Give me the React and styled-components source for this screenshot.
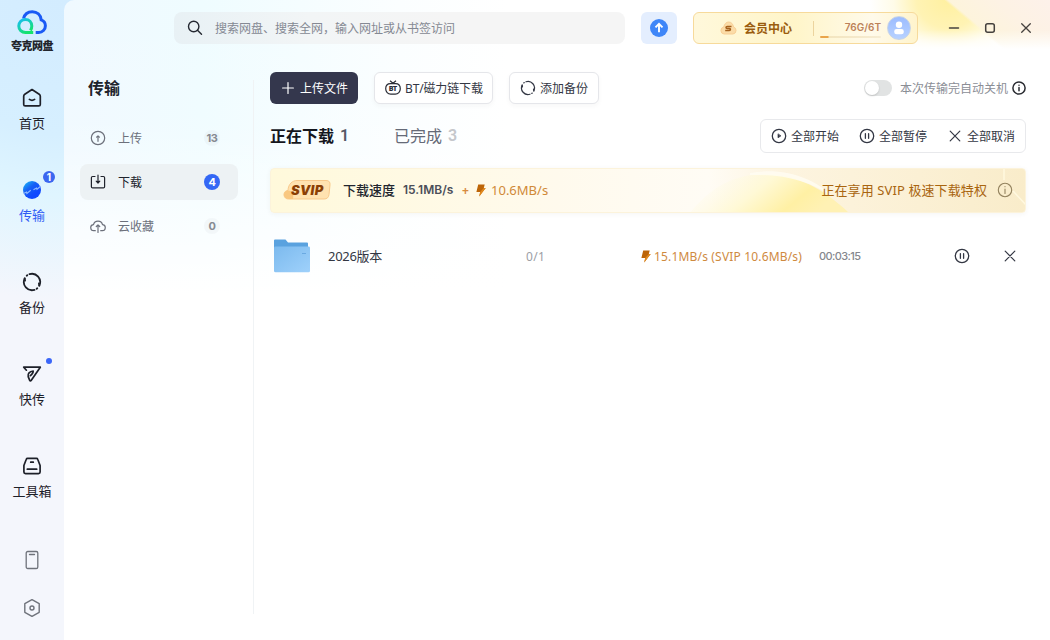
import React, { useState } from "react";
import styled, { createGlobalStyle } from "styled-components";

const GlobalStyle = createGlobalStyle`
  * { box-sizing: border-box; }
  body {
    margin: 0;
    overflow: hidden;
    font-family: "Noto Sans", "Noto Sans CJK SC", sans-serif;
    font-size: 12px;
    color: #23262f;
  }
  svg { display: block; flex: none; }
`;

const Window = styled.div`
  display: flex;
  width: 1050px;
  height: 640px;
  background: radial-gradient(ellipse 330px 300px at 64px 0, #d3ecff 0%, #d6efff 45%, #dff5ff 65%, #f4f6fc 100%);
`;

const Rail = styled.nav`
  width: 64px;
  display: flex;
  flex-direction: column;
  align-items: center;
  padding-top: 9px;
`;

const Brand = styled.div`
  height: 79px;
  display: flex;
  flex-direction: column;
  align-items: center;
  gap: 1px;
  font-size: 11px;
  font-weight: 900;
  line-height: 16px;
  letter-spacing: -0.5px;
  white-space: nowrap;
  color: #22252c;
`;

const RailItem = styled.div`
  position: relative;
  width: 64px;
  height: 92px;
  display: flex;
  flex-direction: column;
  align-items: center;
  font-size: 13px;
  line-height: 18px;
  gap: 6px;
  color: ${(p) => (p.$active ? "#2f5cf5" : "#1d2029")};
`;

const RailBadge = styled.span`
  position: absolute;
  left: 43px;
  top: -9px;
  width: 12px;
  height: 12px;
  border-radius: 50%;
  background: #3b66f0;
  color: #fff;
  font: bold 10px/12px Inter, sans-serif;
  text-align: center;
`;

const RailDot = styled.span`
  position: absolute;
  left: 46px;
  top: -6px;
  width: 6px;
  height: 6px;
  border-radius: 50%;
  background: #3b66f8;
`;

const RailFoot = styled.div`
  display: flex;
  flex-direction: column;
  gap: 28px;
  padding-top: 2px;
`;

const Panel = styled.main`
  flex: 1;
  display: flex;
  flex-direction: column;
  border-top-left-radius: 10px;
  background:
    linear-gradient(to bottom, rgba(255, 255, 255, 0) 0%, rgba(255, 255, 255, 0.1) 20%, #fff 46%),
    linear-gradient(to right, #f0f9ff 0%, #effcff 14%, #fbfeff 34%, #fff 45%);
`;

const Header = styled.header`
  height: 56px;
  display: flex;
  align-items: center;
  padding-left: 110px;
  background:
    linear-gradient(to bottom, rgba(255, 255, 255, 0) 30px, #fff 49px) right top / 190px 56px no-repeat,
    linear-gradient(40deg, rgba(253, 245, 226, 0) 0 51%, #fdf4dc 53%, #fdf2e4 75%, #fdf1ea 100%) right top / 150px 56px no-repeat,
    radial-gradient(ellipse 78px 70px at 884px 0, #fff0a0 0%, #fff3b4 40%, rgba(255, 248, 210, 0.5) 70%, rgba(255, 255, 255, 0) 100%) no-repeat;
`;

const SearchBox = styled.div`
  width: 451px;
  height: 32px;
  display: flex;
  align-items: center;
  gap: 12px;
  padding-left: 13px;
  border-radius: 8px;
  background: linear-gradient(to right, #e8f1f5, #f2f5f6 30%, #f5f5f5 60%);
  color: #858993;
  white-space: nowrap;
`;

const UpgradeButton = styled.button`
  width: 36px;
  height: 32px;
  margin-left: 16px;
  padding: 0 9px;
  border: 0;
  border-radius: 6px;
  background: #e4eefe;
`;

const MemberBar = styled.div`
  width: 225px;
  height: 32px;
  display: flex;
  align-items: center;
  margin-left: 16px;
  padding: 0 6px 0 26px;
  border: 1px solid #f7da9b;
  border-radius: 6px;
  background: linear-gradient(to right, #fff8db, #fff5c9 45%, #fffaea 80%, #fff4cc);
  color: #9a5c0e;
`;

const MemberTitle = styled.span`
  width: 70px;
  margin-left: 7px;
  font-weight: 700;
`;

const Quota = styled.div`
  width: 68px;
  height: 20px;
  display: flex;
  flex-direction: column;
  justify-content: space-between;
  align-items: flex-end;
  color: #bc8159;
  font: 600 10px/15px Inter, sans-serif;
`;

const QuotaText = styled.span`
  margin-top: 2px;
`;

const QuotaTrack = styled.div`
  width: 61px;
  height: 2px;
  border-radius: 1px;
  background: linear-gradient(to right, #e9a54b 0 8px, #f3e5bf 9px, #f6ecd3);
`;

const Divider = styled.i`
  width: 1px;
  height: 15px;
  margin-left: -1px;
  background: #ecd49e;
`;

const Avatar = styled.div`
  width: 24px;
  height: 24px;
  margin-left: 6px;
  flex: none;
  border-radius: 50%;
  background: linear-gradient(#9cbcff, #b8d2ff);
  border: 1px solid #c8d4e6;
`;

const WindowButtons = styled.div`
  display: flex;
  gap: 20px;
  margin-left: 28px;
  color: #45413e;
`;

const Body = styled.div`
  flex: 1;
  display: flex;
`;

const Sidebar = styled.aside`
  width: 174px;
  padding: 20px 0 0 16px;
`;

const SideTitle = styled.h1`
  margin: 0 0 20px 8px;
  font-size: 16px;
  line-height: 24px;
  font-weight: 700;
  color: #20232b;
`;

const SideItem = styled.div`
  height: 36px;
  margin-bottom: 8px;
  display: flex;
  align-items: center;
  padding: 0 16px 0 10px;
  border-radius: 8px;
  background: ${(p) => (p.$active ? "#edf2f4" : "transparent")};
  color: ${(p) => (p.$active ? "#20232c" : "#6c707b")};
`;

const SideLabel = styled.span`
  flex: 1;
  margin-left: 12px;
`;

const Count = styled.span`
  min-width: 16px;
  height: 16px;
  margin-right: 2px;
  border-radius: 8px;
  background: ${(p) => (p.$active ? "#3468f5" : "rgba(130, 140, 150, 0.06)")};
  color: ${(p) => (p.$active ? "#fff" : "#868a92")};
  font: 700 11px/16px Inter, sans-serif;
  letter-spacing: -0.3px;
  text-align: center;
`;

const SideLine = styled.i`
  width: 1px;
  height: 534px;
  margin: 24px 0 0 15px;
  background: #f0f3f5;
`;

const Content = styled.section`
  width: 756px;
  margin: 16px 0 0 16px;
`;

const Toolbar = styled.div`
  height: 32px;
  display: flex;
  align-items: center;
  gap: 16px;
`;

const ToolButton = styled.button`
  height: 32px;
  width: ${(p) => p.$width}px;
  display: flex;
  align-items: center;
  gap: ${(p) => (p.$dark ? 6 : 4)}px;
  padding: 0 0 0 ${(p) => (p.$dark ? 12 : 10)}px;
  border: ${(p) => (p.$dark ? "0" : "1px solid #e5e6ea")};
  border-radius: 6px;
  background: ${(p) => (p.$dark ? "#34374d" : "#fff")};
  color: ${(p) => (p.$dark ? "#fff" : "#333744")};
  box-shadow: ${(p) => (p.$dark ? "none" : "0 2px 5px rgba(40, 45, 60, 0.04)")};
  font-family: inherit;
  font-size: 12px;
  letter-spacing: ${(p) => p.$tracking || 0}px;
  white-space: nowrap;
`;

const Shutdown = styled.div`
  display: flex;
  align-items: center;
  margin-left: auto;
  color: #8b8e96;
  gap: 4px;
`;

const Switch = styled.button`
  width: 28px;
  height: 16px;
  margin-right: 4px;
  padding: 1px;
  border: 0;
  border-radius: 8px;
  background: ${(p) => (p.$on ? "#3468f5" : "#e1e3e3")};
  display: flex;
  justify-content: ${(p) => (p.$on ? "flex-end" : "flex-start")};
`;

const Knob = styled.span`
  width: 14px;
  height: 14px;
  border-radius: 50%;
  background: #fff;
  box-shadow: 0 1px 2px rgba(0, 0, 0, 0.15);
`;

const TabRow = styled.div`
  height: 34px;
  display: flex;
  align-items: center;
  margin-top: 15px;
`;

const Tab = styled.div`
  width: 124px;
  display: flex;
  align-items: center;
  padding-bottom: 2px;
  font-size: 16px;
  font-weight: ${(p) => (p.$active ? 700 : 400)};
  color: ${(p) => (p.$active ? "#14161d" : "#656a77")};
`;

const TabCount = styled.span`
  margin: 2px 0 0 6px;
  font: 600 16px/20px Roboto, sans-serif;
  color: ${(p) => (p.$active ? "#565966" : "#c5c7cb")};
`;

const Batch = styled.div`
  width: 266px;
  height: 34px;
  display: flex;
  align-items: center;
  justify-content: space-between;
  margin-left: auto;
  padding: 0 10px;
  border: 1px solid #e8e9ec;
  border-radius: 6px;
  background: #fff;
`;

const BatchAction = styled.span`
  display: flex;
  align-items: center;
  gap: 4px;
  color: #333744;
`;

const Banner = styled.div`
  height: 45px;
  display: flex;
  align-items: center;
  margin-top: 15px;
  padding-bottom: 1px;
  border: 1px solid #fcf3db;
  border-radius: 4px;
  overflow: hidden;
  box-shadow: 0 1px 5px rgba(60, 50, 20, 0.05);
  background: linear-gradient(to right, #fff9db, #fffaed 38%, #fffcf5 58%, #fdf4e0 68%, #fbf0d4 86%, #f9ecca);
  position: relative;
`;

const BannerArt = styled.svg`
  position: absolute;
  right: 0;
  top: 0;
`;

const Svip = styled.div`
  position: relative;
  width: 48px;
  height: 22px;
  margin-left: 12px;
`;

const SvipText = styled.b`
  position: absolute;
  left: 8px;
  top: 3px;
  color: #8b3f04;
  font: italic 900 13px/16px Inter, sans-serif;
  letter-spacing: 0.3px;
`;

const SpeedLabel = styled.span`
  margin-left: 12px;
  padding-bottom: 2px;
  font-size: 13px;
  font-weight: 500;
`;

const Speed = styled.span`
  width: 52px;
  margin-left: 8px;
  font: 600 12px/18px Inter, sans-serif;
  color: #4b4e59;
  white-space: nowrap;
`;

const Boost = styled.span`
  display: flex;
  align-items: center;
  gap: 5px;
  margin-left: 7px;
  color: #d08937;
  font-size: 13px;
`;

const Plus = styled.b`
  width: 9px;
  font-size: 12px;
  color: #d78b40;
`;

const Perk = styled.span`
  position: relative;
  display: flex;
  align-items: center;
  gap: 10px;
  margin: 0 12px 0 auto;
  padding-bottom: 1px;
  color: #a9650f;
  font-size: 13px;
  letter-spacing: 0.1px;
`;

const FileRow = styled.div`
  height: 64px;
  display: grid;
  grid-template-columns: 54px 198px 115px 178px 135px 48px 16px;
  align-items: center;
  margin-top: 11px;
  padding-left: 4px;
  color: #333743;
`;

const FileName = styled.span`
  padding-bottom: 2px;
  font-size: 13px;
  letter-spacing: -0.3px;
`;

const FileCount = styled.span`
  color: #9c9ea5;
  letter-spacing: 0.3px;
`;

const FileSpeed = styled.span`
  display: flex;
  align-items: center;
  gap: 3px;
  color: #cf8a3f;
  letter-spacing: 0.17px;
  white-space: nowrap;
`;

const FileTime = styled.span`
  color: #85878d;
  font: 500 11px/18px Inter, sans-serif;
  letter-spacing: -0.6px;
`;

const Icon = ({ size = 16, width = 1.2, box = 16, color = "currentColor", children }) => (
  <svg
    width={size}
    height={size}
    viewBox={`0 0 ${box} ${box}`}
    fill="none"
    stroke={color}
    strokeWidth={width}
    strokeLinecap="round"
    strokeLinejoin="round"
  >
    {children}
  </svg>
);

const CloudLogo = () => (
  <svg width="32" height="28" viewBox="0 0 32 28" fill="none">
    <defs>
      <linearGradient id="logoGreen" x1="0" y1="0" x2="0.6" y2="1">
        <stop stopColor="#18bdf5" />
        <stop offset="1" stopColor="#15e36c" />
      </linearGradient>
    </defs>
    <path d="M7.500 9.500C8.600 5.200 12.200 2.700 16.300 2.700c4.800 0 8.400 3.300 8.900 8.100 2.600.9 4.200 3.100 4.200 6 0 3.700-2.900 6.700-6.700 6.700h-3" stroke="#1a5af5" strokeWidth="3" />
    <path d="M17.200 23.500H9.500c-3.900 0-6.700-2.800-6.700-6.500s2.900-6.600 6.600-6.600 6.400 2.900 6.400 6.700c0 1.500-.5 3.100-1.300 4.400" stroke="url(#logoGreen)" strokeWidth="3" />
  </svg>
);

const HomeIcon = () => (
  <Icon size={20} box={20} width={1.7}>
    <path d="M10 1.500 17.200 6.200q1.100.8 1.100 2v8.200q0 1.500-1.500 1.500H3.200q-1.500 0-1.500-1.500V8.200q0-1.200 1.100-2z" />
    <path d="M7.400 11.400q2.600 1.900 5.200 0" />
  </Icon>
);

const TransferIcon = () => (
  <svg width="20" height="20" viewBox="0 0 20 20">
    <defs>
      <linearGradient id="transferBall" x1="0" y1="0" x2="0.6" y2="0.75">
        <stop stopColor="#17c3f7" />
        <stop offset="0.55" stopColor="#1761f5" />
        <stop offset="1" stopColor="#1049ff" />
      </linearGradient>
    </defs>
    <circle cx="10" cy="10" r="9" fill="url(#transferBall)" />
    <path d="M1.500 13.500 4.500 12l.4 1.500 3.800-3.200M11.500 9.800 14.500 8l.5 1.200 3.600-3" stroke="#8cb8ff" strokeWidth="1.2" fill="none" />
  </svg>
);

const SyncIcon = ({ size = 20, width = 1.8 }) => (
  <Icon size={size} box={20} width={width}>
    <path d="M7.500 2.200a8.200 8.200 0 0 1 9.800 11.400M12.500 17.800A8.200 8.200 0 0 1 2.700 6.400" />
    <path d="m17.300 13.600-.4-2.200M2.700 6.400l.4 2.200" />
    <path d="M4.700 3.700l.6-.5M15.300 16.300l-.6.5" />
  </Icon>
);

const SendIcon = () => (
  <Icon size={20} box={20} width={1.7}>
    <path d="M4.400 6.200 1.700 3.200h16.600L9.300 16.300q-1.200 1.200-1.800-.4L6.200 12.600c-.8-3 1.400-5.200 5-5.600-.1 2.200-1.200 3.700-2.900 4.700" />
  </Icon>
);

const ToolboxIcon = () => (
  <Icon size={20} box={20} width={1.7}>
    <path d="M5.600 2.300h8.800q1 0 1.300.9l2.400 6.300v6.600q0 1.600-1.600 1.600h-13q-1.600 0-1.600-1.600V9.500l2.400-6.300q.3-.9 1.300-.9zM5.300 13.200h9.400M8.700 6.200h2.600" />
  </Icon>
);

const PhoneIcon = () => (
  <Icon size={20} box={20} width={1.3} color="#6f737b">
    <rect x="4.200" y="1.500" width="11.600" height="17" rx="1.600" />
    <path d="M7.500 4.500h5" />
  </Icon>
);

const HexIcon = () => (
  <Icon size={20} box={20} width={1.4} color="#6f737b">
    <path d="m10 1.700 7.200 4v8.600l-7.200 4-7.200-4V5.700z" />
    <circle cx="10" cy="10" r="2" />
  </Icon>
);

const UploadIcon = () => (
  <Icon>
    <circle cx="8" cy="8" r="6.700" />
    <path d="M8 11.300V5.800M6.600 7.200 8 5.800l1.400 1.400" />
  </Icon>
);

const DownloadIcon = () => (
  <Icon>
    <path d="M5 2.500H2.600q-1.200 0-1.200 1.200v9q0 1.200 1.200 1.200h10.800q1.200 0 1.200-1.200v-9q0-1.200-1.200-1.200H11M8 1v7.800M6.200 7.200 8 9l1.800-1.800" />
  </Icon>
);

const CloudUpIcon = () => (
  <Icon>
    <path d="M5.300 12.700H4a3 3 0 0 1-.5-6A4.600 4.600 0 0 1 12.500 6.700a3 3 0 0 1-.5 6h-1.300M8 14.500V7M6.300 8.500 8 6.800l1.700 1.700" />
  </Icon>
);

const CloseIcon = ({ width = 1.2 }) => (
  <Icon width={width}>
    <path d="m3.200 3.200 9.600 9.600m0-9.600-9.600 9.600" />
  </Icon>
);

const PauseIcon = () => (
  <Icon width={1.3}>
    <circle cx="8" cy="8" r="6.700" />
    <path d="M6.400 5.700v4.600M9.600 5.700v4.600" />
  </Icon>
);

const BoltIcon = () => (
  <svg width="10" height="13" viewBox="0 0 10 13">
    <path d="M2.200.5h6.500L7.800 4h1.900L3.200 12.500 4.200 8H.4z" fill="#bd6508" />
    <path d="M7.800 4h1.900L3.200 12.500 4.200 8z" fill="#e18a1f" />
  </svg>
);

const MemberIcon = () => (
  <svg width="17" height="16" viewBox="0 0 17 16">
    <path d="M4 14a3.500 3.500 0 0 1-.3-6.900C4.500 3.700 6.400 2 8.700 2c2.500 0 4.400 2 4.800 5A3.600 3.600 0 0 1 13 14z" fill="#fbdca8" stroke="#f8cf96" />
    <path d="M11.500 6.500H7.300q-1.300 0-1.300 1t1.200 1h2.200q1.200 0 1 1-.2 1-1.400 1H5.200" fill="none" stroke="#a5611d" strokeWidth="1.500" />
  </svg>
);

const FolderIcon = () => (
  <svg width="36" height="34" viewBox="0 0 36 34">
    <defs>
      <linearGradient id="folderFront" x1="0" y1="0" x2="1" y2="1">
        <stop stopColor="#7cbaee" />
        <stop offset="1" stopColor="#9fd1fb" />
      </linearGradient>
    </defs>
    <path d="M0 1.500Q0 .5 1 .5h10.500l2.500 3h19q1 0 1 1V20H0z" fill="#5aa2df" />
    <path d="M0 8.800q0-1.300 1.500-1.300h33q1.500 0 1.500 1.300v23q0 1.500-1.500 1.500h-33Q0 33.300 0 31.800z" fill="url(#folderFront)" />
    <path d="M28 14.500h4" stroke="#6aaae2" strokeWidth="1" />
  </svg>
);

const railItems = [
  { label: "首页", icon: <HomeIcon /> },
  { label: "传输", icon: <TransferIcon />, badge: 1, active: true },
  { label: "备份", icon: <SyncIcon /> },
  { label: "快传", icon: <SendIcon />, dot: true },
  { label: "工具箱", icon: <ToolboxIcon /> },
];

const sideItems = [
  { label: "上传", icon: <UploadIcon />, count: 13 },
  { label: "下载", icon: <DownloadIcon />, count: 4, active: true },
  { label: "云收藏", icon: <CloudUpIcon />, count: 0 },
];

export default function App() {
  const [shutdown, setShutdown] = useState(false);

  return (
    <Window>
      <GlobalStyle />
      <Rail>
        <Brand>
          <CloudLogo />
          夸克网盘
        </Brand>
        {railItems.map((item) => (
          <RailItem key={item.label} $active={item.active}>
            {item.icon}
            {item.label}
            {item.badge && <RailBadge>{item.badge}</RailBadge>}
            {item.dot && <RailDot />}
          </RailItem>
        ))}
        <RailFoot>
          <PhoneIcon />
          <HexIcon />
        </RailFoot>
      </Rail>

      <Panel>
        <Header>
          <SearchBox>
            <Icon width={1.4} color="#252932">
              <circle cx="6.700" cy="6.500" r="5.200" />
              <path d="m10.500 10.300 4 4" />
            </Icon>
            搜索网盘、搜索全网，输入网址或从书签访问
          </SearchBox>
          <UpgradeButton>
            <svg width="18" height="18" viewBox="0 0 18 18">
              <circle cx="9" cy="9" r="9" fill="#3f86f8" />
              <path d="M9 13.300V5.200M5.500 8.300 9 4.800l3.500 3.500" stroke="#fff" strokeWidth="1.900" fill="none" />
            </svg>
          </UpgradeButton>
          <MemberBar>
            <MemberIcon />
            <MemberTitle>会员中心</MemberTitle>
            <Divider />
            <Quota>
              <QuotaText>76G/6T</QuotaText>
              <QuotaTrack />
            </Quota>
            <Avatar>
              <svg width="22" height="22" viewBox="0 0 22 22" fill="#fff">
                <circle cx="11" cy="7.800" r="3.200" />
                <rect x="6.200" y="12" width="9.600" height="5.300" rx="2.400" />
              </svg>
            </Avatar>
          </MemberBar>
          <WindowButtons>
            <Icon width={1.5}><path d="M3.500 8h9" /></Icon>
            <Icon width={1.5}><rect x="3.700" y="3.700" width="8.600" height="8.600" rx="2" /></Icon>
            <Icon width={1.3}><path d="m3.700 3.700 8.600 8.600m0-8.600-8.600 8.600" /></Icon>
          </WindowButtons>
        </Header>

        <Body>
          <Sidebar>
            <SideTitle>传输</SideTitle>
            {sideItems.map((item) => (
              <SideItem key={item.label} $active={item.active}>
                {item.icon}
                <SideLabel>{item.label}</SideLabel>
                <Count $active={item.active}>{item.count}</Count>
              </SideItem>
            ))}
          </Sidebar>
          <SideLine />

          <Content>
            <Toolbar>
              <ToolButton $dark $width={88}>
                <Icon size={12} box={12} width={1.2}><path d="M6 .6v10.800M.6 6h10.800" /></Icon>
                上传文件
              </ToolButton>
              <ToolButton $width={119} $tracking={-0.15}>
                <svg width="16" height="16" viewBox="0 0 16 16" fill="none" stroke="#292c36" strokeWidth="1.200">
                  <path d="M5.500 3.600h5c3 0 4.800 2.300 4.800 5.200s-2.200 5.400-5 5.400H5.700c-2.800 0-5-2.500-5-5.400s1.800-5.200 4.800-5.200zM5 .8l3 2.500L11 .8" />
                  <text x="8" y="11.300" textAnchor="middle" fill="#292c36" stroke="none" fontSize="6.500" fontWeight="900" fontFamily="Inter">BT</text>
                </svg>
                BT/磁力链下载
              </ToolButton>
              <ToolButton $width={90}>
                <SyncIcon size={16} width={1.5} />
                添加备份
              </ToolButton>
              <Shutdown>
                <Switch $on={shutdown} onClick={() => setShutdown(!shutdown)}>
                  <Knob />
                </Switch>
                本次传输完自动关机
                <Icon width={1.5} size={14} box={14} color="#292b31">
                  <circle cx="7" cy="7" r="6.100" />
                  <path d="M7 6.500v3.300M7 4.200v.1" />
                </Icon>
              </Shutdown>
            </Toolbar>

            <TabRow>
              <Tab $active>正在下载<TabCount $active>1</TabCount></Tab>
              <Tab>已完成<TabCount>3</TabCount></Tab>
              <Batch>
                <BatchAction>
                  <Icon width={1.3}>
                    <circle cx="8" cy="8" r="6.700" />
                    <path d="M7 6.200v3.600L9.700 8z" fill="currentColor" strokeWidth="0.700" />
                  </Icon>
                  全部开始
                </BatchAction>
                <BatchAction><PauseIcon />全部暂停</BatchAction>
                <BatchAction><CloseIcon />全部取消</BatchAction>
              </Batch>
            </TabRow>

            <Banner>
              <BannerArt width="340" height="44" viewBox="0 0 340 44">
                <defs>
                  <linearGradient id="sunFill" x1="0" y1="0" x2="1" y2="0.300">
                    <stop offset="0.150" stopColor="#fffbe8" stopOpacity="0" />
                    <stop offset="0.500" stopColor="#fff9d6" />
                    <stop offset="0.800" stopColor="#fff0a4" />
                    <stop offset="1" stopColor="#fff1b4" />
                  </linearGradient>
                </defs>
                <path d="M5 44C25 18 50 5 80 5c32 0 60 16 84 39z" fill="url(#sunFill)" />
                <path d="M65 4C98-2 128 8 150 29 125 12 100 5 65 6z" fill="#fffdf3" opacity="0.800" />
                <path d="M319 0v11M328 22l13 14" stroke="#fff8df" strokeWidth="1.500" />
              </BannerArt>
              <Svip>
                <svg width="48" height="22" viewBox="0 0 48 22">
                  <path d="M5.500 20C2 20 .7 17 1 15c.4-2.400 2-3.300 4-3.600C5.200 5 9.500 1.500 14 1.500h29q4.500 0 4 4.500l-1 9.500q-.5 4.500-5 4.500z" fill="#ffe2b0" stroke="#f8c98b" />
                  <path d="M5.500 20C2 20 .7 17 1 15c.4-2.400 2-3.300 4-3.600 4 0 6 3 5 8.600z" fill="#f9c880" />
                </svg>
                <SvipText>SVIP</SvipText>
              </Svip>
              <SpeedLabel>下载速度</SpeedLabel>
              <Speed>15.1MB/s</Speed>
              <Boost>
                <Plus>+</Plus>
                <BoltIcon />
                10.6MB/s
              </Boost>
              <Perk>
                正在享用 SVIP 极速下载特权
                <Icon width={1.1} color="#94835f">
                  <circle cx="8" cy="8" r="6.700" />
                  <path d="M8 7v4.500M8 4.600v.2" />
                </Icon>
              </Perk>
            </Banner>

            <FileRow>
              <FolderIcon />
              <FileName>2026版本</FileName>
              <FileCount>0/1</FileCount>
              <FileSpeed><BoltIcon />15.1MB/s (SVIP 10.6MB/s)</FileSpeed>
              <FileTime>00:03:15</FileTime>
              <PauseIcon />
              <CloseIcon />
            </FileRow>
          </Content>
        </Body>
      </Panel>
    </Window>
  );
}
